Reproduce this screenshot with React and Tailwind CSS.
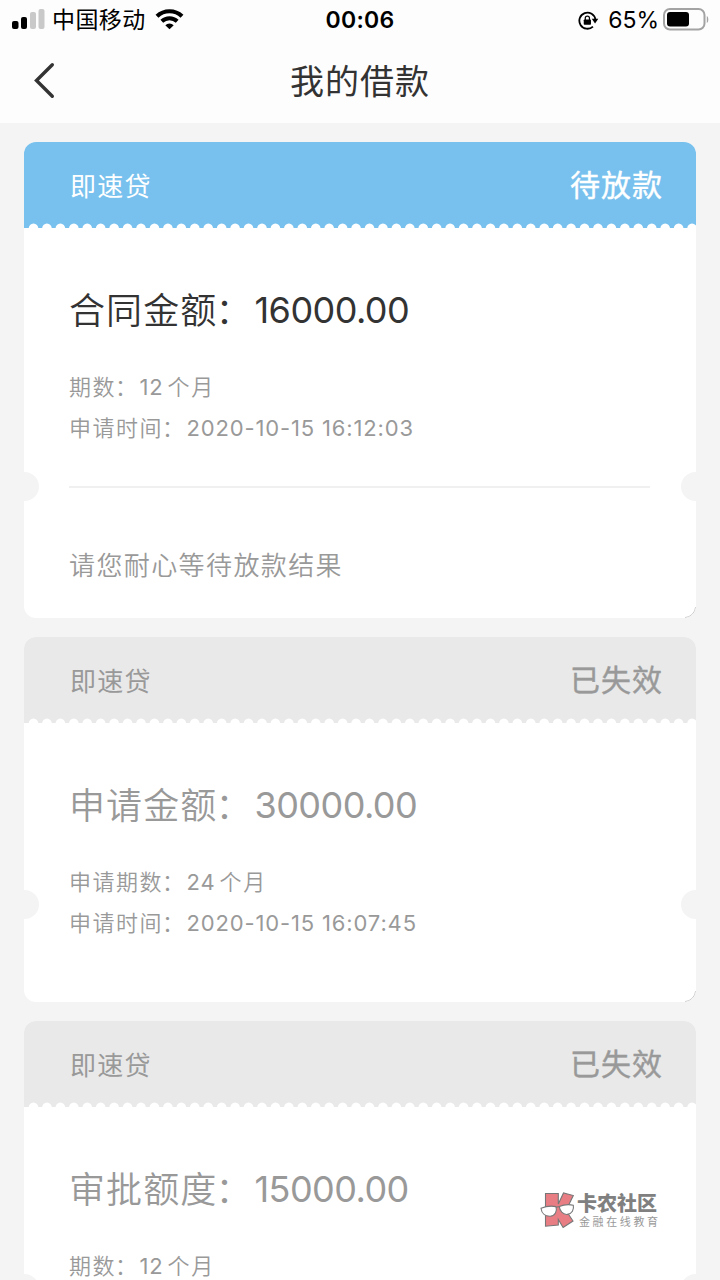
import React from 'react';
import clsx from 'clsx';

const loans = [
  {
    product: '即速贷',
    status: '待放款',
    active: true,
    amountLabel: '合同金额',
    amount: '16000.00',
    termLabel: '期数',
    term: '12',
    timeLabel: '申请时间',
    time: '2020-10-15 16:12:03',
    note: '请您耐心等待放款结果',
  },
  {
    product: '即速贷',
    status: '已失效',
    amountLabel: '申请金额',
    amount: '30000.00',
    termLabel: '申请期数',
    term: '24',
    timeLabel: '申请时间',
    time: '2020-10-15 16:07:45',
  },
  {
    product: '即速贷',
    status: '已失效',
    amountLabel: '审批额度',
    amount: '15000.00',
    termLabel: '期数',
    term: '12',
  },
];

const StatusBar = () => (
  <div className="grid h-10 grid-cols-3 items-center pl-3 pr-3 text-black">
    <div className="flex items-center">
      <svg className="mb-0.5" width="33" height="20" viewBox="0 0 33 20">
        <rect x="0" y="12" width="6.5" height="8" rx="2" fill="#000" />
        <rect x="9" y="8" width="6" height="12" rx="2" fill="#000" />
        <rect x="18" y="3" width="6" height="17" rx="2" fill="#c9c9c9" />
        <rect x="26.5" y="0" width="6" height="20" rx="2" fill="#c9c9c9" />
      </svg>
      <span className="ml-[7px] pt-px text-[23px] leading-[39px] tracking-[0.4px]">中国移动</span>
      <svg className="mb-0.5 ml-[9px]" width="29" height="22" viewBox="0 0 29 22">
        <path d="M2 8.2a18.2 18.2 0 0 1 25 0" fill="none" stroke="#000" strokeWidth="4.2" />
        <path d="M6.8 13.2a11.2 11.2 0 0 1 15.4 0" fill="none" stroke="#000" strokeWidth="4" />
        <path d="M14.5 21.3l-4.2-4.1a6 6 0 0 1 8.4 0z" fill="#000" />
      </svg>
    </div>
    <span className="text-center text-[23px] font-semibold tracking-[0.3px]">00:06</span>
    <div className="-mr-[1px] flex items-center justify-end">
      <svg width="21" height="19" viewBox="0 0 22 20">
        <path d="M15.7 16.4A8.5 8.5 0 1 1 18.3 9" fill="none" stroke="#000" strokeWidth="1.9" />
        <path d="M14.4 8.2h6.9l-3.4 5z" fill="#000" />
        <rect x="6" y="9" width="7.6" height="5.4" rx="0.8" fill="#000" />
        <path d="M7.6 9.4V7.6a2.2 2.2 0 0 1 4.4 0v1.8" fill="none" stroke="#000" strokeWidth="1.3" />
      </svg>
      <span className="ml-[9px] text-[23px]">65%</span>
      <svg className="mb-0.5 ml-1 shrink-0" width="46" height="23" viewBox="0 0 46 23">
        <rect x="1" y="1" width="40.5" height="20.5" rx="6" fill="none" stroke="#a3a3a3" strokeWidth="2" />
        <rect x="4" y="4" width="22" height="14.5" rx="3" fill="#000" />
        <path d="M43.8 8v7c2-.9 2-6.1 0-7z" fill="#a3a3a3" />
      </svg>
    </div>
  </div>
);

const NavBar = () => (
  <div className="grid h-[83px] grid-cols-3 items-center">
    <svg className="mb-0.5 ml-[34px]" width="21" height="37" viewBox="0 0 21 37">
      <path d="M18.3 2.7L2.5 18.5l15.8 15.8" fill="none" stroke="#333" strokeWidth="3.4" strokeLinecap="round" />
    </svg>
    <h1 className="text-center text-[34px] leading-[83px] tracking-[1px] text-[#333]">我的借款</h1>
  </div>
);

// Torn ticket edge, 50 teeth across the card
const TornEdge = () => (
  <svg className="absolute -bottom-px left-0" width="672" height="6" viewBox="0 0 672 6">
    {Array.from({ length: 50 }, (_, i) => (
      <ellipse key={i} cx={9.5 + i * 13.44} cy="6" rx="4.9" ry="5.5" fill="#fff" />
    ))}
  </svg>
);

const Notches = ({ active }) => (
  <>
    <span className={clsx('absolute -left-[14px] h-[29px] w-[29px] rounded-full bg-[#f4f4f4]', active ? 'top-[330px]' : 'top-[253px]')} />
    <span className={clsx('absolute -right-[14px] h-[29px] w-[29px] rounded-full bg-[#f4f4f4]', active ? 'top-[330px]' : 'top-[253px]')} />
  </>
);

const LoanCard = ({ loan }) => (
  <div
    className={clsx(
      'relative overflow-hidden rounded-xl bg-white',
      loan.active ? 'h-[476px]' : 'h-[365px]'
    )}
  >
    <div
      className={clsx(
        'relative flex h-[86px] items-center justify-between pl-[46px] pr-[33px]',
        loan.active ? 'bg-[#78c1ee] text-white' : 'bg-[#e9e9e9] text-[#999]'
      )}
    >
      <span className="pt-0.5 text-[26px] tracking-[1.3px]">{loan.product}</span>
      <span className="pt-px text-[30px] tracking-[1px] [-webkit-text-stroke:0.4px_currentColor]">{loan.status}</span>
      <TornEdge />
    </div>

    <div className={clsx('whitespace-nowrap px-[45px] pt-[54px]', loan.active ? 'text-[#333]' : 'text-[#999]')}>
      <div className="flex h-14 items-center text-[36px]">
        <span className="pt-0.5 font-[350] tracking-[1.1px]">
          {loan.amountLabel}
          <span className="-ml-0.5 mr-0.5">：</span>
        </span>
        <span className="tracking-[-0.55px]">{loan.amount}</span>
      </div>

      <div className="mt-[29px] text-[22px] text-[#999]">
        <div className="flex h-[40.5px] items-center">
          <span className="pt-px font-[350] tracking-[1.5px]">
            {loan.termLabel}
            <span className="-ml-px mr-px">：</span>
          </span>
          <span className="pt-px tracking-[0.8px]">{loan.term}</span>
          <span className="ml-1 pt-px font-[350] tracking-[1.8px]">个月</span>
        </div>
        {loan.time && (
          <div className="flex h-[40.5px] items-center">
            <span className="pt-px font-[350] tracking-[1.5px]">
              {loan.timeLabel}
              <span className="-ml-px mr-px">：</span>
            </span>
            <span className="pt-px tracking-[0.85px]">{loan.time}</span>
          </div>
        )}
      </div>

      {loan.note && (
        <div className="mr-px mt-[38px] border-t-2 border-[#f0f0f0] pt-[58px] text-[26px] font-[350] leading-[40px] tracking-[1.4px] text-[#999]">
          {loan.note}
        </div>
      )}
    </div>

    <Notches active={loan.active} />
    <svg className="absolute bottom-0 right-0" width="12" height="12" viewBox="0 0 12 12">
      <path d="M11.6 1A11.5 11.5 0 0 1 1 11.6" fill="none" stroke="#c4c4c4" strokeWidth="0.9" />
    </svg>
  </div>
);

const Watermark = () => (
  <div className="absolute left-[540px] top-[1191px] flex items-start">
    <svg width="35" height="38" viewBox="0 0 35 38">
      <path
        d="M5.5 2.5h12.8v10.5l5.2-11 9.8 2.5-7.3 15 7 10.5-9.900 6.500-4.800-8v5.500l-12.800 1.200V18z"
        fill="#e87d84"
        stroke="#777"
        strokeWidth="1.1"
      />
      <path d="M1 17.2q7.500-3 15-1.600c1.300 4.500-.8 9.400-5.800 9.600C5 25.300 1.600 22 1 17.200z" fill="#fff" stroke="#777" strokeWidth="1.1" />
      <path d="M19.3 15.400q7-2.800 14-1.200c.9 4.500-1.200 8.800-6 9.200-4.600.4-7.600-3.500-8-8z" fill="#fff" stroke="#777" strokeWidth="1.1" />
      <path d="M16 16.700q1.700-1.500 3.400-.7" fill="none" stroke="#777" strokeWidth="1.1" />
    </svg>
    <div className="ml-[2px] whitespace-nowrap pt-px text-[#808080]">
      <div className="text-[20px] font-black leading-[25px]">卡农社区</div>
      <div className="ml-[2px] text-[11px] leading-[10px] tracking-[2.6px] text-[#999]">金融在线教育</div>
    </div>
  </div>
);

const App = () => {
  return (
    <div className="relative h-[1280px] w-[720px] overflow-hidden bg-[#f4f4f4] font-['Inter','Noto_Sans_CJK_SC',sans-serif]">
      <header className="bg-[#fdfdfd]">
        <StatusBar />
        <NavBar />
      </header>

      <main className="flex flex-col gap-[19px] px-6 pt-[19px]">
        {loans.map((loan, index) => (
          <LoanCard key={index} loan={loan} />
        ))}
      </main>

      <Watermark />
    </div>
  );
};

export default App;
